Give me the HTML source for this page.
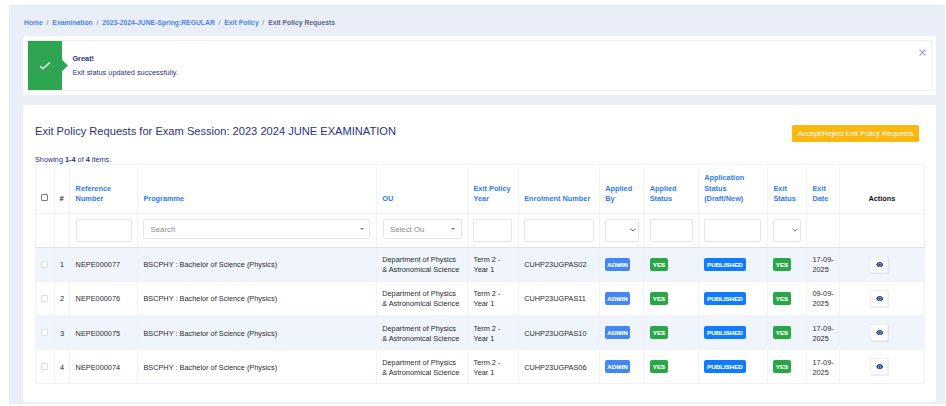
<!DOCTYPE html>
<html><head><meta charset="utf-8">
<style>
*{box-sizing:border-box;margin:0;padding:0}
html,body{width:946px;height:406px;overflow:hidden;background:#fff;font-family:"Liberation Sans",sans-serif}
.abs{position:absolute}
#bg{left:9px;top:5px;width:936px;height:399px;background:#e9eef8;border-top:1px solid #e3e6ed}
#crumb{left:24px;top:17.5px;font-size:6.8px;font-weight:bold;color:#4a86ea;white-space:nowrap;line-height:10px}
#crumb .sep{color:#6f748c;font-weight:normal;margin:0 3.9px 0 3.7px}
#crumb .cur{color:#5d6290}
#alert{left:23px;top:36px;width:913px;height:58.6px;background:#fff;border-radius:2px}
#alertin{left:27px;top:40px;width:905px;height:51px;border:1px solid #eceef3}
#green{left:28px;top:40.6px;width:34px;height:49.5px;background:#2fa551}
#arrow{left:62px;top:60px;width:0;height:0;border-top:5.7px solid transparent;border-bottom:5.7px solid transparent;border-left:5.6px solid #2fa551}
#great{left:72.4px;top:53.85px;font-size:7.35px;font-weight:bold;color:#2a3184;line-height:10px;white-space:nowrap}
#msg{left:72.4px;top:67.8px;font-size:7.35px;color:#2a3184;line-height:10px;white-space:nowrap}
#close{left:919.2px;top:49.4px;width:7px;height:7px}
#card{left:23px;top:105px;width:913px;height:297px;background:#fff;border-radius:2px}
#title{left:35px;top:123.8px;font-size:11.12px;color:#2a3184;line-height:14px;white-space:nowrap}
#btn{left:792px;top:125px;width:127px;height:16.7px;background:#fbb811;border-radius:1.5px;color:#fff;font-size:7.45px;line-height:18.1px;text-align:center;white-space:nowrap}
#showing{left:35px;top:155.3px;font-size:7.3px;color:#2a3184;line-height:10px;white-space:nowrap}
table{position:absolute;left:34.5px;top:164px;border-collapse:collapse;table-layout:fixed}
td,th{border:1px solid #f0f2f5;font-size:7.35px;padding:1.6px 0 0 5.6px;vertical-align:middle;text-align:left;color:#2b2b2b;line-height:10px;overflow:visible;white-space:nowrap}
th{font-weight:bold;color:#2f7cf2;line-height:10.2px;vertical-align:bottom;padding-top:0;padding-bottom:9px}
tr.hdr{height:49px}
tr.flt{height:34px}
tr.flt td{border-bottom-color:#dfe3ea}
tr.row{height:34.1px}
tr.odd td{background:#eff4fd}
.inp{position:absolute;background:#fff;border:1px solid #e4e6ea;border-radius:2px}
.sel2{position:absolute;background:#fff;border:1px solid #e4e6ea;border-radius:2px;font-size:7.85px;color:#8a8a8a;line-height:19.2px;padding-left:6.5px;white-space:nowrap}
.tri{position:absolute;width:0;height:0;border-left:2px solid transparent;border-right:2px solid transparent;border-top:2.3px solid #777}
.chev{position:absolute}
.cb{position:absolute;width:7.3px;height:7.3px;border:1px solid #d9dce2;border-radius:1.2px;background:#fff}
.badge{position:absolute;-webkit-text-stroke:0.12px #fff;height:12.9px;line-height:14.3px;font-size:6.2px;font-weight:bold;color:#fff;border-radius:2px;text-align:center;white-space:nowrap}
.adm{background:#4287f5}
.yes{background:#2aa745}
.pub{background:#0f7bff}
.eye{position:absolute;width:17.9px;height:16.6px;background:#fff;border:1px solid #f0f1f4;border-radius:1.5px;box-shadow:0.3px 0.6px 1.2px rgba(0,0,0,.08)}
</style></head><body>
<div id="bg" class="abs"></div>
<div id="crumb" class="abs">Home<span class="sep">/</span>Examination<span class="sep">/</span>2023-2024-JUNE-Spring:REGULAR<span class="sep">/</span>Exit Policy<span class="sep">/</span><span class="cur">Exit Policy Requests</span></div>
<div id="alert" class="abs"></div>
<div id="alertin" class="abs"></div>
<div id="green" class="abs"></div>
<svg class="abs" style="left:61px;top:58px" width="9" height="16" viewBox="61 58 9 16"><polygon points="61,59.8 62,59.8 67.8,65.6 62,71.4 61,71.4" fill="#2fa551"/></svg>
<svg class="abs" style="left:39px;top:60.6px" width="12" height="9.5" viewBox="0 0 12 9.5"><path d="M1.2 5.3 L3.9 7.8 L10.8 1.4" fill="none" stroke="#fff" stroke-width="1.3"/></svg>
<div id="great" class="abs">Great!</div>
<div id="msg" class="abs">Exit status updated successfully.</div>
<svg id="close" class="abs" viewBox="0 0 7 7"><path d="M0.5 0.5L6.5 6.5M6.5 0.5L0.5 6.5" stroke="#a3a6c8" stroke-width="1.1"/></svg>
<div id="card" class="abs"></div>
<div id="title" class="abs">Exit Policy Requests for Exam Session: 2023 2024 JUNE EXAMINATION</div>
<div id="btn" class="abs">Accept/Reject Exit Policy Requests</div>
<div id="showing" class="abs">Showing <b>1-4</b> of <b>4</b> items.</div>
<table>
<colgroup>
<col style="width:19.3px"><col style="width:15.2px"><col style="width:67.8px"><col style="width:238.8px"><col style="width:91.3px"><col style="width:50.7px"><col style="width:81.1px"><col style="width:44.4px"><col style="width:54.5px"><col style="width:69.3px"><col style="width:39px"><col style="width:32.9px"><col style="width:85.3px">
</colgroup>
<tr class="hdr"><th></th><th></th><th>Reference<br>Number</th><th>Programme</th><th>OU</th><th>Exit Policy<br>Year</th><th>Enrolment Number</th><th>Applied<br>By</th><th>Applied<br>Status</th><th>Application<br>Status<br>(Draft/New)</th><th>Exit<br>Status</th><th>Exit<br>Date</th><th style="color:#111;text-align:center;padding-left:0">Actions</th></tr>
<tr class="flt"><td></td><td></td><td></td><td></td><td></td><td></td><td></td><td></td><td></td><td></td><td></td><td></td><td></td></tr>
<tr class="row odd"><td></td><td style="padding-left:5.2px">1</td><td>NEPE000077</td><td>BSCPHY : Bachelor of Science (Physics)</td><td>Department of Physics<br>&amp; Astronomical Science</td><td>Term 2 -<br>Year 1</td><td>CUHP23UGPAS02</td><td></td><td></td><td></td><td></td><td>17-09-<br>2025</td><td></td></tr>
<tr class="row"><td></td><td style="padding-left:5.2px">2</td><td>NEPE000076</td><td>BSCPHY : Bachelor of Science (Physics)</td><td>Department of Physics<br>&amp; Astronomical Science</td><td>Term 2 -<br>Year 1</td><td>CUHP23UGPAS11</td><td></td><td></td><td></td><td></td><td>09-09-<br>2025</td><td></td></tr>
<tr class="row odd"><td></td><td style="padding-left:5.2px">3</td><td>NEPE000075</td><td>BSCPHY : Bachelor of Science (Physics)</td><td>Department of Physics<br>&amp; Astronomical Science</td><td>Term 2 -<br>Year 1</td><td>CUHP23UGPAS10</td><td></td><td></td><td></td><td></td><td>17-09-<br>2025</td><td></td></tr>
<tr class="row"><td></td><td style="padding-left:5.2px">4</td><td>NEPE000074</td><td>BSCPHY : Bachelor of Science (Physics)</td><td>Department of Physics<br>&amp; Astronomical Science</td><td>Term 2 -<br>Year 1</td><td>CUHP23UGPAS06</td><td></td><td></td><td></td><td></td><td>17-09-<br>2025</td><td></td></tr>
</table>
<!-- header checkbox and # -->
<div class="cb" style="left:40.8px;top:194px;border-color:#7a7a7a;border-radius:1px"></div>
<div class="abs" style="left:59.6px;top:193.6px;font-size:7.35px;font-weight:bold;font-style:italic;color:#222;line-height:10px">#</div>
<!-- filter inputs -->
<div class="inp" style="left:75.7px;top:219px;width:56.2px;height:22.6px"></div>
<div class="sel2" style="left:143px;top:219.3px;width:227.4px;height:19.4px">Search</div>
<div class="tri" style="left:359.5px;top:228px"></div>
<div class="sel2" style="left:382.5px;top:219.3px;width:79.2px;height:19.4px">Select Ou</div>
<div class="tri" style="left:450.7px;top:228px"></div>
<div class="inp" style="left:473.3px;top:219px;width:38.5px;height:22.6px"></div>
<div class="inp" style="left:523.5px;top:219px;width:70px;height:22.6px"></div>
<div class="inp" style="left:604.7px;top:219px;width:33.9px;height:22.6px"></div>
<svg class="chev" style="left:630px;top:228.3px" width="6" height="4" viewBox="0 0 6 4"><path d="M0.6 0.8L3 3.1L5.4 0.8" fill="none" stroke="#6a6a6a" stroke-width="1"/></svg>
<div class="inp" style="left:649.8px;top:219px;width:42.9px;height:22.6px"></div>
<div class="inp" style="left:704.1px;top:219px;width:57.2px;height:22.6px"></div>
<div class="inp" style="left:773.2px;top:219px;width:27.8px;height:22.6px"></div>
<svg class="chev" style="left:792px;top:228.3px" width="6" height="4" viewBox="0 0 6 4"><path d="M0.6 0.8L3 3.1L5.4 0.8" fill="none" stroke="#6a6a6a" stroke-width="1"/></svg>
<!-- row overlays -->
<div class="cb" style="left:40.8px;top:260.7px"></div>
<div class="badge adm" style="left:604.9px;top:257.9px;width:25.2px">ADMIN</div>
<div class="badge yes" style="left:650.2px;top:257.9px;width:17.7px">YES</div>
<div class="badge pub" style="left:704.1px;top:257.9px;width:41.6px">PUBLISHED</div>
<div class="badge yes" style="left:773.3px;top:257.9px;width:17.5px">YES</div>
<div class="eye" style="left:870.4px;top:256.05px"></div>
<svg class="abs" style="left:875.6px;top:261.65px" width="7.4" height="5.4" viewBox="0 0 7.4 5.4"><path d="M0.1 2.7C1.3 0.7 2.5 0.1 3.7 0.1S6.1 0.7 7.3 2.7C6.1 4.7 4.9 5.3 3.7 5.3S1.3 4.7 0.1 2.7Z" fill="#1f3591"/><circle cx="3.7" cy="2.7" r="1.5" fill="none" stroke="#fff" stroke-width="0.55"/></svg>
<div class="cb" style="left:40.8px;top:294.8px"></div>
<div class="badge adm" style="left:604.9px;top:292px;width:25.2px">ADMIN</div>
<div class="badge yes" style="left:650.2px;top:292px;width:17.7px">YES</div>
<div class="badge pub" style="left:704.1px;top:292px;width:41.6px">PUBLISHED</div>
<div class="badge yes" style="left:773.3px;top:292px;width:17.5px">YES</div>
<div class="eye" style="left:870.4px;top:290.15px"></div>
<svg class="abs" style="left:875.6px;top:295.75px" width="7.4" height="5.4" viewBox="0 0 7.4 5.4"><path d="M0.1 2.7C1.3 0.7 2.5 0.1 3.7 0.1S6.1 0.7 7.3 2.7C6.1 4.7 4.9 5.3 3.7 5.3S1.3 4.7 0.1 2.7Z" fill="#1f3591"/><circle cx="3.7" cy="2.7" r="1.5" fill="none" stroke="#fff" stroke-width="0.55"/></svg>
<div class="cb" style="left:40.8px;top:328.9px"></div>
<div class="badge adm" style="left:604.9px;top:326.1px;width:25.2px">ADMIN</div>
<div class="badge yes" style="left:650.2px;top:326.1px;width:17.7px">YES</div>
<div class="badge pub" style="left:704.1px;top:326.1px;width:41.6px">PUBLISHED</div>
<div class="badge yes" style="left:773.3px;top:326.1px;width:17.5px">YES</div>
<div class="eye" style="left:870.4px;top:324.25px"></div>
<svg class="abs" style="left:875.6px;top:329.85px" width="7.4" height="5.4" viewBox="0 0 7.4 5.4"><path d="M0.1 2.7C1.3 0.7 2.5 0.1 3.7 0.1S6.1 0.7 7.3 2.7C6.1 4.7 4.9 5.3 3.7 5.3S1.3 4.7 0.1 2.7Z" fill="#1f3591"/><circle cx="3.7" cy="2.7" r="1.5" fill="none" stroke="#fff" stroke-width="0.55"/></svg>
<div class="cb" style="left:40.8px;top:363px"></div>
<div class="badge adm" style="left:604.9px;top:360.2px;width:25.2px">ADMIN</div>
<div class="badge yes" style="left:650.2px;top:360.2px;width:17.7px">YES</div>
<div class="badge pub" style="left:704.1px;top:360.2px;width:41.6px">PUBLISHED</div>
<div class="badge yes" style="left:773.3px;top:360.2px;width:17.5px">YES</div>
<div class="eye" style="left:870.4px;top:358.35px"></div>
<svg class="abs" style="left:875.6px;top:363.95px" width="7.4" height="5.4" viewBox="0 0 7.4 5.4"><path d="M0.1 2.7C1.3 0.7 2.5 0.1 3.7 0.1S6.1 0.7 7.3 2.7C6.1 4.7 4.9 5.3 3.7 5.3S1.3 4.7 0.1 2.7Z" fill="#1f3591"/><circle cx="3.7" cy="2.7" r="1.5" fill="none" stroke="#fff" stroke-width="0.55"/></svg>

</body></html>
